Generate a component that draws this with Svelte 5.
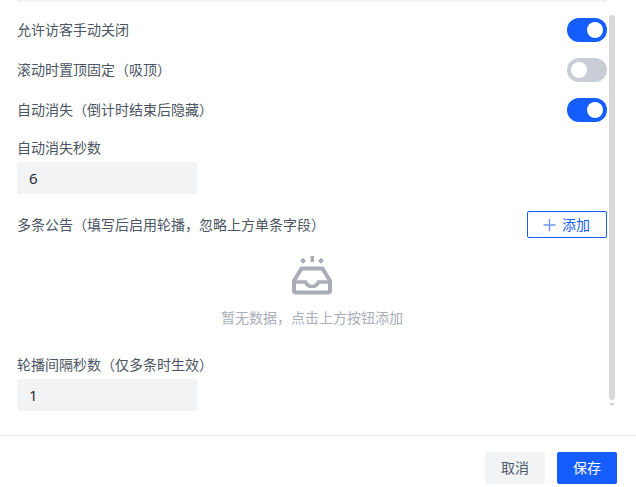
<script lang="ts">
  let closable = $state(true);
  let sticky = $state(false);
  let autoHide = $state(true);
  let hideSeconds = $state(6);
  let interval = $state(1);

  const toggles = $derived([
    { label: '允许访客手动关闭', on: closable, flip: () => (closable = !closable) },
    { label: '滚动时置顶固定（吸顶）', on: sticky, flip: () => (sticky = !sticky) },
    { label: '自动消失（倒计时结束后隐藏）', on: autoHide, flip: () => (autoHide = !autoHide) }
  ]);
</script>

<div class="dialog">
  <div class="body">
    <div class="strip"></div>

    <div class="toggles">
      {#each toggles as t}
        <div class="row">
          <span class="label">{t.label}</span>
          <button class="switch" class:on={t.on} onclick={t.flip} aria-label={t.label}>
            <span class="knob"></span>
          </button>
        </div>
      {/each}
    </div>

    <div class="field seconds">
      <label for="hide">自动消失秒数</label>
      <input id="hide" type="text" bind:value={hideSeconds} />
    </div>

    <div class="list-head">
      <span class="label">多条公告（填写后启用轮播，忽略上方单条字段）</span>
      <button class="add">
        <svg width="14" height="14" viewBox="0 0 14 14" aria-hidden="true">
          <path d="M6.500 1v12M0.500 7h12" stroke="#6f97f5" stroke-width="1.400" fill="none" />
        </svg>
        添加
      </button>
    </div>

    <div class="empty">
      <svg width="42" height="40" viewBox="0 0 42 40" aria-hidden="true">
        <path d="M19.500 1h3.500v6h-3.500z" fill="#a9adb7" />
        <path d="M12 2.700l3 3-3 3-3-3zM30 2.700l3 3-3 3-3-3z" fill="#a9adb7" />
        <path
          d="M10.500 13.500h21L39 26v9.500a2 2 0 0 1-2 2H5a2 2 0 0 1-2-2V26z"
          fill="none"
          stroke="#a9adb7"
          stroke-width="4"
          stroke-linejoin="round"
        />
        <path
          d="M3 27h11.500c1.200 3 3.700 4.500 6.500 4.500s5.300-1.500 6.500-4.500H39"
          fill="none"
          stroke="#a9adb7"
          stroke-width="3.600"
        />
      </svg>
      <p>暂无数据，点击上方按钮添加</p>
    </div>

    <div class="field">
      <label for="interval">轮播间隔秒数（仅多条时生效）</label>
      <input id="interval" type="text" bind:value={interval} />
    </div>

    <div class="scrollbar">
      <span class="thumb"></span>
      <span class="arrow"></span>
    </div>
  </div>

  <footer>
    <button class="btn cancel">取消</button>
    <button class="btn save">保存</button>
  </footer>
</div>

<style>
  :global(body) {
    margin: 0;
    background: #ffffff;
  }

  .dialog {
    width: 636px;
    height: 487px;
    display: flex;
    flex-direction: column;
    font-family: 'Noto Sans CJK SC', 'Liberation Sans', sans-serif;
    font-size: 14px;
    color: #4b5563;
  }

  .body {
    position: relative;
    height: 435px;
    padding: 0 29px 0 17px;
    box-sizing: border-box;
    overflow: hidden;
  }

  .strip {
    height: 2px;
    background: #f3f3f5;
    border-radius: 0 0 3px 3px;
  }

  .toggles {
    display: flex;
    flex-direction: column;
    gap: 16px;
    margin-top: 16px;
  }

  .row {
    display: flex;
    align-items: center;
    justify-content: space-between;
    height: 24px;
  }

  .label {
    line-height: 20px;
    margin-top: -2px;
  }

  label {
    line-height: 20px;
  }

  .switch {
    width: 40px;
    height: 24px;
    padding: 4px;
    border: none;
    border-radius: 12px;
    background: #c9ced6;
    display: flex;
    justify-content: flex-start;
    cursor: pointer;
  }

  .switch.on {
    background: #165dff;
    justify-content: flex-end;
  }

  .knob {
    width: 16px;
    height: 16px;
    border-radius: 50%;
    background: #ffffff;
  }

  .field {
    display: flex;
    flex-direction: column;
    align-items: flex-start;
    gap: 5px;
  }

  .seconds {
    margin-top: 15px;
  }

  input {
    width: 180px;
    height: 32px;
    box-sizing: border-box;
    padding: 0 12px;
    border: none;
    border-radius: 2px;
    background: #f2f3f5;
    font-family: 'Open Sans', 'Liberation Sans', sans-serif;
    font-size: 15px;
    color: #1d2129;
    outline: none;
  }

  .list-head {
    display: flex;
    align-items: center;
    justify-content: space-between;
    margin-top: 17px;
    height: 27px;
  }

  .add {
    width: 80px;
    height: 27px;
    display: flex;
    align-items: center;
    justify-content: center;
    gap: 5px;
    padding: 0 1px 2px 0;
    border: 1px solid #165dff;
    border-radius: 2px;
    background: #ffffff;
    color: #165dff;
    font: inherit;
    line-height: 20px;
    cursor: pointer;
  }

  .add svg {
    margin-top: 2px;
  }

  .empty {
    display: flex;
    flex-direction: column;
    align-items: center;
    height: 99px;
    margin-top: 17px;
  }

  .empty p {
    margin: 12px 0 0;
    line-height: 20px;
    color: #a9aeb8;
  }

  .scrollbar {
    position: absolute;
    top: 15px;
    left: 609px;
    width: 6px;
    display: flex;
    flex-direction: column;
    align-items: center;
  }

  .thumb {
    width: 6px;
    height: 385px;
    border-radius: 3px;
    background: #d9d9d9;
  }

  .arrow {
    margin-top: 3px;
    border-left: 3px solid transparent;
    border-right: 3px solid transparent;
    border-top: 3px solid #cfcfcf;
  }

  footer {
    flex: 1;
    display: flex;
    justify-content: flex-end;
    gap: 12px;
    padding: 16px 19px 0 0;
    border-top: 1px solid #e5e6eb;
    box-sizing: border-box;
  }

  .btn {
    width: 60px;
    height: 32px;
    padding: 0 0 2px;
    border: none;
    border-radius: 2px;
    font: inherit;
    cursor: pointer;
  }

  .cancel {
    background: #f2f3f5;
    color: #4e5969;
  }

  .save {
    background: #165dff;
    color: #ffffff;
  }
</style>
